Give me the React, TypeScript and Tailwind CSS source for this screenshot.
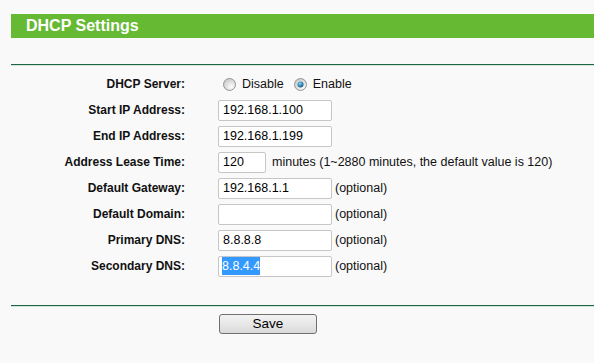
import { Fragment } from "react";

const font = "font-['Liberation_Sans',Arial,sans-serif]";

const Radio = ({ checked }: { checked?: boolean }) => (
  <svg width="13" height="13" viewBox="0 0 13 13" className="shrink-0">
    <defs>
      <radialGradient id={checked ? "rc" : "ru"} cx="0.65" cy="0.7" r="0.8">
        <stop offset="0" stopColor="#fdfdfd" />
        <stop offset="1" stopColor="#c4c4c4" />
      </radialGradient>
      <radialGradient id="dot" cx="0.4" cy="0.35" r="0.7">
        <stop offset="0" stopColor="#8fd0f0" />
        <stop offset="0.6" stopColor="#2a86b8" />
        <stop offset="1" stopColor="#1b4f73" />
      </radialGradient>
    </defs>
    <circle cx="6.5" cy="6.5" r="6" fill={checked ? "url(#rc)" : "url(#ru)"} stroke="#959595" strokeWidth="1" />
    {checked && <circle cx="6.5" cy="6.5" r="3" fill="url(#dot)" />}
  </svg>
);

const TextBox = ({
  value,
  width = "w-[114px]",
  selected,
}: {
  value: string;
  width?: string;
  selected?: boolean;
}) => (
  <div
    className={`${width} h-[21px] shrink-0 bg-white border border-[#c6c6c6] rounded-[2px] flex items-center pl-[4px] text-[12.5px] text-black`}
  >
    {selected ? (
      <span className="bg-[#3399ff] text-white leading-[18px] -ml-px">{value}</span>
    ) : (
      value
    )}
  </div>
);

const Divider = () => (
  <div>
    <div className="h-px bg-[#1f6446]" />
    <div className="h-px bg-[#cfe6d8]" />
  </div>
);

export default function App() {
  const rows = [
    { label: "Start IP Address:", value: "192.168.1.100" },
    { label: "End IP Address:", value: "192.168.1.199" },
  ];
  const optional = [
    { label: "Default Gateway:", value: "192.168.1.1" },
    { label: "Default Domain:", value: "" },
    { label: "Primary DNS:", value: "8.8.8.8" },
    { label: "Secondary DNS:", value: "8.8.4.4", selected: true },
  ];

  return (
    <div className={`w-[594px] h-[363px] overflow-hidden bg-[#f9f9f9] ${font}`}>
      <div className="pl-[11px] pt-[14px]">
        <div className="h-[24px] bg-[#66b933] flex items-center pl-[15px] text-white font-bold text-[16px]">
          DHCP Settings
        </div>
        <div className="mt-[26px]">
          <Divider />
        </div>
      </div>

      <div className="mt-[5px] grid grid-cols-[185px_1fr] gap-x-[33px] auto-rows-[26px] items-center text-[12.5px] text-[#111]">
        <div className="text-right font-bold text-[12px]">DHCP Server:</div>
        <div className="flex items-center">
          <div className="ml-[5px]">
            <Radio />
          </div>
          <span className="ml-[6px]">Disable</span>
          <div className="ml-[10px]">
            <Radio checked />
          </div>
          <span className="ml-[6px]">Enable</span>
        </div>

        {rows.map((r) => (
          <Fragment key={r.label}>
            <div className="text-right font-bold text-[12px]">{r.label}</div>
            <div>
              <TextBox value={r.value} />
            </div>
          </Fragment>
        ))}

        <div className="text-right font-bold text-[12px]">Address Lease Time:</div>
        <div className="flex items-center gap-[6px]">
          <TextBox value="120" width="w-[48px]" />
          <span>minutes (1~2880 minutes, the default value is 120)</span>
        </div>

        {optional.map((r) => (
          <Fragment key={r.label}>
            <div className="text-right font-bold text-[12px]">{r.label}</div>
            <div className="flex items-center gap-[3px]">
              <TextBox value={r.value} selected={r.selected} />
              <span>(optional)</span>
            </div>
          </Fragment>
        ))}
      </div>

      <div className="mt-[26px] pl-[11px]">
        <Divider />
      </div>

      <div className="mt-[7px] pl-[219px]">
        <button className="w-[98px] h-[20px] border border-[#707070] rounded-[3px] bg-gradient-to-b from-[#f4f4f4] to-[#dadada] text-[13.5px] text-black leading-none flex items-center justify-center">
          Save
        </button>
      </div>
    </div>
  );
}
